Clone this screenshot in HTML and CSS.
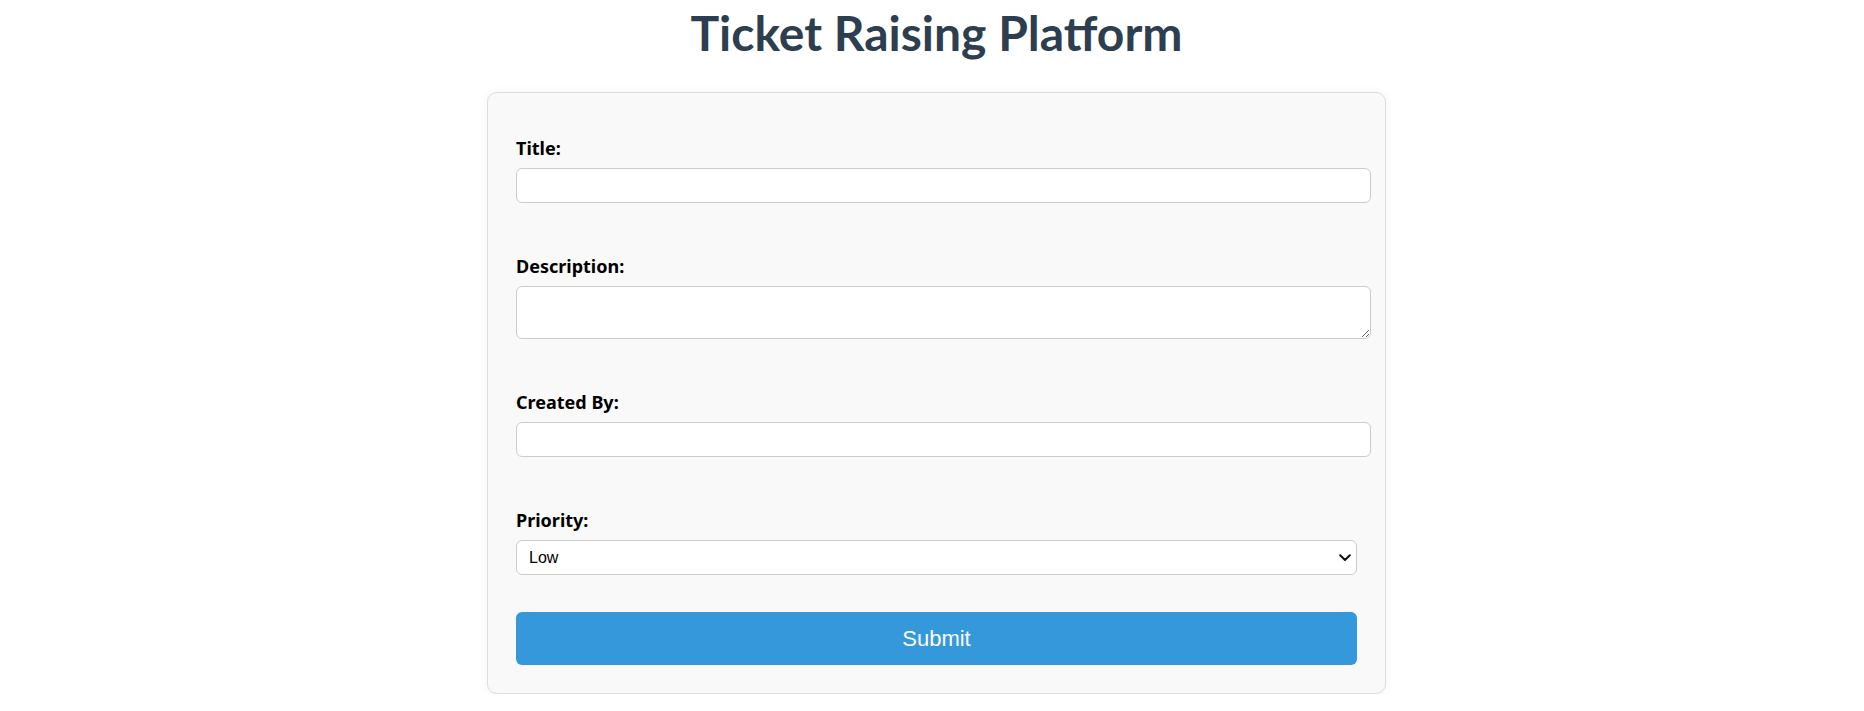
FILE: index.html
```html
<!DOCTYPE html>
<html lang="en">
<head>
<meta charset="UTF-8">
<title>Ticket Raising Platform</title>
<link rel="stylesheet" href="styles.css">
</head>
<body>
  <h1 class="page-title">Ticket Raising Platform</h1>
  <div class="card">
    <form class="ticket-form">
      <div class="field">
        <label class="field-label" for="title">Title:</label>
        <input class="text-input" type="text" id="title">
      </div>
      <div class="field">
        <label class="field-label" for="description">Description:</label>
        <textarea class="text-area" id="description"></textarea>
      </div>
      <div class="field">
        <label class="field-label" for="createdBy">Created By:</label>
        <input class="text-input" type="text" id="createdBy">
      </div>
      <div class="field">
        <label class="field-label" for="priority">Priority:</label>
        <div class="select-wrap">
          <select class="select-input" id="priority">
            <option>Low</option>
            <option>Medium</option>
            <option>High</option>
          </select>
          <svg class="select-arrow" width="12" height="8" viewBox="0 0 12 8" aria-hidden="true">
            <path d="M1.2 1.2 L6 6 L10.8 1.2" fill="none" stroke="#111111" stroke-width="2" stroke-linecap="round" stroke-linejoin="round"/>
          </svg>
        </div>
      </div>
      <button class="submit-btn" type="submit">Submit</button>
    </form>
  </div>
</body>
</html>
```

FILE: styles.css
```css
body {
  margin: 0;
  padding: 0 0 0 9px;
  background: #ffffff;
  font-family: "Noto Sans", "Open Sans", sans-serif;
}

.page-title {
  margin: 4px 0 30px;
  font-family: Lato, "Noto Sans", sans-serif;
  font-size: 48px;
  line-height: 58px;
  font-weight: 700;
  color: #2c3e50;
  text-align: center;
}

.card {
  box-sizing: border-box;
  width: 899px;
  margin: 0 auto;
  padding: 45px 28px 28px;
  background: #f9f9f9;
  border: 1px solid #dddddd;
  border-radius: 10px;
  box-shadow: 0 0 10px rgba(0, 0, 0, 0.05);
}

.ticket-form {
  display: flex;
  flex-direction: column;
}

.field {
  display: flex;
  flex-direction: column;
  align-items: flex-start;
}

.field + .field {
  margin-top: 53px;
}

.field-label {
  display: block;
  font-size: 18px;
  line-height: 20px;
  font-weight: 700;
  color: #000000;
  margin-bottom: 10px;
}

.text-input,
.text-area {
  box-sizing: content-box;
  width: 100%;
  padding: 6px;
  margin: 0;
  border: 1px solid #cccccc;
  border-radius: 6px;
  background: #ffffff;
  font-family: "Liberation Sans", Arial, sans-serif;
  font-size: 16px;
}

.text-input {
  height: 21px;
}

.text-area {
  height: 39px;
  resize: both;
}

.select-wrap {
  position: relative;
  width: 100%;
}

.select-input {
  display: block;
  box-sizing: border-box;
  width: 100%;
  height: 35px;
  padding: 6px 30px 6px 12px;
  margin: 0;
  border: 1px solid #cccccc;
  border-radius: 6px;
  background: #ffffff;
  color: #000000;
  font-family: "Liberation Sans", Arial, sans-serif;
  font-size: 16px;
  -webkit-appearance: none;
  appearance: none;
}

.select-arrow {
  position: absolute;
  right: 6px;
  top: 14px;
  pointer-events: none;
}

.submit-btn {
  margin-top: 37px;
  width: 100%;
  height: 53px;
  border: none;
  border-radius: 6px;
  background: #3498db;
  color: #ffffff;
  font-family: "Liberation Sans", Arial, sans-serif;
  font-size: 22px;
  cursor: pointer;
}
```
